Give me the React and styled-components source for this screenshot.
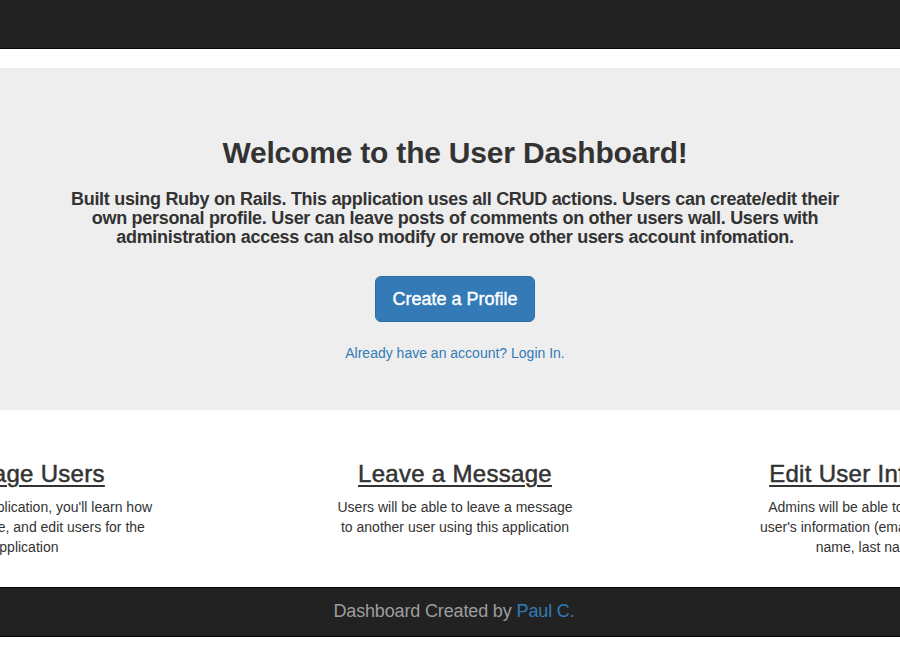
import React from 'react';
import styled, { createGlobalStyle } from 'styled-components';

const GlobalStyle = createGlobalStyle`
  html, body {
    margin: 0;
    padding: 0;
    overflow-x: hidden;
    background: #fff;
  }
  body {
    font-family: "Liberation Sans", Arial, sans-serif;
    font-size: 14px;
    line-height: 1.42857;
    color: #333;
  }
`;

const Navbar = styled.nav`
  height: 48px;
  background: #222;
  border-bottom: 1px solid #080808;
  margin-bottom: 19px;
`;

const Jumbotron = styled.section`
  background: #eee;
  padding: 68px 0 47px;
`;

// content is centred a few pixels right of the window centre
const Container = styled.div`
  display: flex;
  flex-direction: column;
  align-items: center;
  padding-left: 10px;
  text-align: center;
`;

const Title = styled.h2`
  margin: 0 0 21px;
  font-size: 30px;
  line-height: 33px;
  font-weight: 700;
  letter-spacing: -0.2px;
  color: #333;
`;

const Lead = styled.h4`
  margin: 0 0 29px;
  font-size: 18px;
  line-height: 19px;
  font-weight: 700;
  letter-spacing: -0.3px;
  color: #333;
`;

const PrimaryButton = styled.button`
  font-family: inherit;
  font-size: 18px;
  line-height: 24px;
  padding: 10px 16px;
  border-radius: 6px;
  border: 1px solid #2e6da4;
  background: #337ab7;
  color: #fff;
  -webkit-text-stroke: 0.4px #fff;
  cursor: pointer;
  margin-bottom: 21px;
`;

const TextLink = styled.a`
  color: #337ab7;
  text-decoration: none;
  font-size: 14px;
  line-height: 20px;
`;

const Features = styled.div`
  display: flex;
  justify-content: center;
  padding: 51px 0 30px 10px;
`;

const FeatureRow = styled.div`
  flex: none;
  display: grid;
  grid-template-columns: repeat(3, 250px);
  column-gap: 180px;
`;

const Feature = styled.div`
  display: flex;
  flex-direction: column;
  align-items: center;
  text-align: center;
`;

const FeatureTitle = styled.h3`
  margin: 0 0 10px;
  font-size: 24px;
  line-height: 26px;
  font-weight: 500;
  white-space: nowrap;
  letter-spacing: 0.3px;
  -webkit-text-stroke: 0.5px #333;
  text-decoration: underline;
  text-decoration-thickness: 2px;
  text-underline-offset: 3px;
  color: #333;
`;

const FeatureText = styled.p`
  margin: 0;
  font-size: 14px;
  line-height: 20px;
  white-space: nowrap;
  color: #333;
`;

const Footer = styled.footer`
  height: 48px;
  background: #222;
  border-top: 1px solid #080808;
  border-bottom: 1px solid #080808;
  display: flex;
  align-items: center;
  justify-content: center;
  padding-left: 8px;
  font-size: 18px;
  letter-spacing: -0.15px;
  color: #9d9d9d;
`;

const FooterLink = styled.a`
  color: #337ab7;
  text-decoration: none;
  margin-left: 5px;
`;

const leadLines = [
  'Built using Ruby on Rails. This application uses all CRUD actions. Users can create/edit their',
  'own personal profile. User can leave posts of comments on other users wall. Users with',
  'administration access can also modify or remove other users account infomation.',
];

const features = [
  {
    title: 'Manage Users',
    lines: ["By using this application, you'll learn how", 'to create, delete, and edit users for the', 'application'],
  },
  {
    title: 'Leave a Message',
    lines: ['Users will be able to leave a message', 'to another user using this application'],
  },
  {
    title: 'Edit User Information',
    lines: ['Admins will be able to update another', "user's information (email, password, first", 'name, last name, etc.)'],
  },
];

function Lines({ lines }) {
  return lines.map((line, i) => (
    <React.Fragment key={line}>
      {i > 0 && <br />}
      {line}
    </React.Fragment>
  ));
}

function App() {
  return (
    <>
      <GlobalStyle />
      <Navbar />
      <Jumbotron>
        <Container>
          <Title>Welcome to the User Dashboard!</Title>
          <Lead>
            <Lines lines={leadLines} />
          </Lead>
          <PrimaryButton type="button">Create a Profile</PrimaryButton>
          <TextLink href="#login">Already have an account? Login In.</TextLink>
        </Container>
      </Jumbotron>
      <Features>
        <FeatureRow>
          {features.map((f) => (
            <Feature key={f.title}>
              <FeatureTitle>{f.title}</FeatureTitle>
              <FeatureText>
                <Lines lines={f.lines} />
              </FeatureText>
            </Feature>
          ))}
        </FeatureRow>
      </Features>
      <Footer>
        Dashboard Created by <FooterLink href="#paul">Paul C.</FooterLink>
      </Footer>
    </>
  );
}

export default App;
